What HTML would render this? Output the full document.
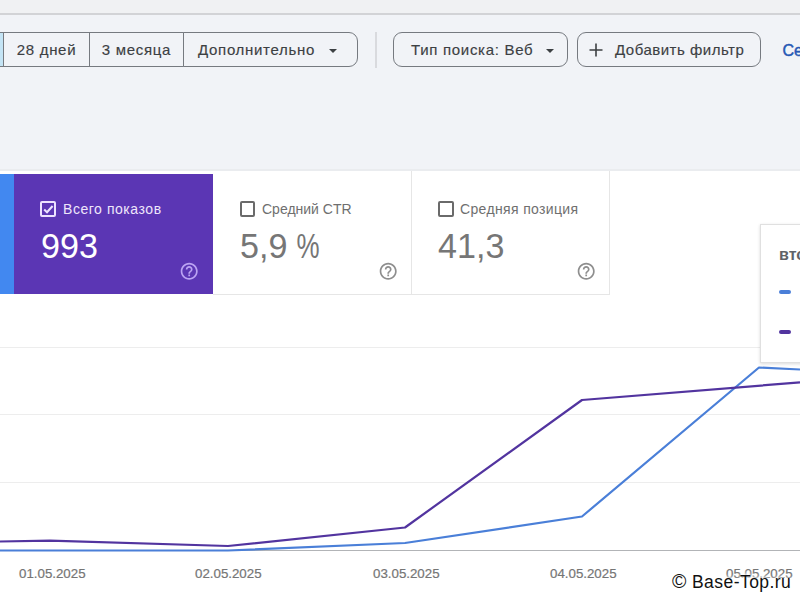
<!DOCTYPE html>
<html><head><meta charset="utf-8">
<style>
*{margin:0;padding:0;box-sizing:border-box}
html,body{width:800px;height:600px;overflow:hidden;background:#f1f3f7;font-family:"Liberation Sans",sans-serif;position:relative}
.abs{position:absolute}
.toparea{left:0;top:0;width:800px;height:13px;background:#f0f1f3}
.topline{left:0;top:12.5px;width:800px;height:2px;background:#d2d3d6}
.btn{position:absolute;top:32px;height:35px;border:1px solid #767a80;color:#3c4043;font-size:15px;letter-spacing:0.7px;line-height:33px;white-space:nowrap;background:#f1f3f7;-webkit-text-stroke:0.15px #3c4043}
.sel{left:-10px;width:14px;background:#c4e4f5;border-right:1px solid #767a80}
.b28{left:4px;width:86px;border-left:none;text-align:center}
.b3m{left:89px;width:95px;border-left:1px solid #767a80;text-align:center}
.bmore{left:183px;width:175px;border-radius:0 9px 9px 0;padding-left:14px}
.divider{left:375px;top:32px;width:2px;height:36px;background:#d9dade}
.btype{left:393px;width:175px;border-radius:9px;padding-left:17px}
.badd{left:577px;width:184px;border-radius:9px;padding-left:37px;letter-spacing:0.5px}
.caret{position:absolute;width:0;height:0;border-left:4.5px solid transparent;border-right:4.5px solid transparent;border-top:4.5px solid #3c4043}
.link{left:782.5px;top:41.5px;color:#2658b4;font-size:16px;-webkit-text-stroke:0.45px #2658b4}
.cards{left:0;top:171px;width:800px;height:429px;background:#fff}
.strip{left:0;top:174px;width:14px;height:120px;background:#4288f0}
.purple{left:14px;top:174px;width:199px;height:120px;background:#5b36b4}
.card{top:171px;height:124px;border-right:1px solid #e6e6e6;border-bottom:1px solid #e6e6e6;background:#fff}
.lbl{position:absolute;font-size:14px;letter-spacing:0.35px;white-space:nowrap}
.val{position:absolute;font-size:35px;white-space:nowrap;transform:scaleX(0.975);transform-origin:0 0}
.cb{position:absolute;width:15.6px;height:15.6px;border:2px solid #6a6a6a;border-radius:2px}
.q{position:absolute;width:17px;height:17px;border:1.4px solid #8a8a8a;border-radius:50%;font-size:12px;line-height:14px;text-align:center;color:#8a8a8a}
.grid{left:0;width:800px;height:1px;background:#ededed}
.xl{position:absolute;top:566px;font-size:13.3px;color:#757575;-webkit-text-stroke:0.2px #757575;white-space:nowrap}
.tip{left:760px;top:224px;width:60px;height:139px;background:#fff;border:1px solid #e0e0e0;box-shadow:0 1px 3px rgba(0,0,0,.15)}
.wm{top:572px;font-size:17.5px;letter-spacing:0.45px;color:#111;white-space:nowrap;text-shadow:0 0 2px #fff,0 0 4px #fff,0 0 5px #fff,0 0 6px #fff}
</style></head><body>
<div class="abs toparea"></div><div class="abs topline"></div>
<div class="btn sel"></div>
<div class="btn b28">28 дней</div>
<div class="btn b3m">3 месяца</div>
<div class="btn bmore">Дополнительно<span class="caret" style="left:145px;top:16px"></span></div>
<div class="abs divider"></div>
<div class="btn btype">Тип поиска: Веб<span class="caret" style="left:151.5px;top:15.5px"></span></div>
<div class="btn badd"><svg class="abs" style="left:10px;top:9px" width="16" height="16" viewBox="0 0 16 16"><path d="M8 1.5V14.5M1.5 8H14.5" stroke="#3c4043" stroke-width="1.6"/></svg>Добавить фильтр</div>
<div class="abs link">Се</div>

<div class="abs cards"></div><div class="abs" style="left:0;top:169px;width:800px;height:2px;background:#eaecef"></div>
<div class="abs strip"></div>
<div class="abs purple">
  <div class="cb" style="left:26.3px;top:27px;border-color:#ece2ff"></div>
  <svg class="abs" style="left:26px;top:27px" width="16" height="16" viewBox="0 0 16 16"><path d="M4.2 8.6L7 11.2 12.6 5" fill="none" stroke="#ece2ff" stroke-width="2.1"/></svg>
  <div class="lbl" style="left:49px;top:27px;color:#eee6fb;letter-spacing:0.55px">Всего показов</div>
  <div class="val" style="left:27px;top:52px;color:#fff">993</div>
  <svg class="abs" style="left:164.8px;top:87px" width="20.4" height="20.4" viewBox="0 0 24 24"><path d="M11 18h2v-2h-2v2zm1-16C6.48 2 2 6.48 2 12s4.48 10 10 10 10-4.48 10-10S17.52 2 12 2zm0 18c-4.41 0-8-3.59-8-8s3.59-8 8-8 8 3.59 8 8-3.59 8-8 8zm0-14c-2.21 0-4 1.79-4 4h2c0-1.1.9-2 2-2s2 .9 2 2c0 2-3 1.75-3 5h2c0-2.25 3-2.5 3-5 0-2.21-1.79-4-4-4z" fill="#bba3f3"/></svg>
</div>
<div class="abs card" style="left:213px;width:199px">
  <div class="cb" style="left:26.6px;top:30px"></div>
  <div class="lbl" style="left:49px;top:30px;color:#6f6f6f;letter-spacing:0">Средний CTR</div>
  <div class="val" style="left:27px;top:55px;color:#767676">5,9 <span style="display:inline-block;transform:scaleX(0.76);transform-origin:0 0">%</span></div>
  <svg class="abs" style="left:165px;top:90px" width="20.4" height="20.4" viewBox="0 0 24 24"><path d="M11 18h2v-2h-2v2zm1-16C6.48 2 2 6.48 2 12s4.48 10 10 10 10-4.48 10-10S17.52 2 12 2zm0 18c-4.41 0-8-3.59-8-8s3.59-8 8-8 8 3.59 8 8-3.59 8-8 8zm0-14c-2.21 0-4 1.79-4 4h2c0-1.1.9-2 2-2s2 .9 2 2c0 2-3 1.75-3 5h2c0-2.25 3-2.5 3-5 0-2.21-1.79-4-4-4z" fill="#8e8e8e"/></svg>
</div>
<div class="abs card" style="left:412px;width:198px">
  <div class="cb" style="left:26.4px;top:30px"></div>
  <div class="lbl" style="left:48px;top:30px;color:#6f6f6f">Средняя позиция</div>
  <div class="val" style="left:26px;top:55px;color:#767676">41,3</div>
  <svg class="abs" style="left:164px;top:90px" width="20.4" height="20.4" viewBox="0 0 24 24"><path d="M11 18h2v-2h-2v2zm1-16C6.48 2 2 6.48 2 12s4.48 10 10 10 10-4.48 10-10S17.52 2 12 2zm0 18c-4.41 0-8-3.59-8-8s3.59-8 8-8 8 3.59 8 8-3.59 8-8 8zm0-14c-2.21 0-4 1.79-4 4h2c0-1.1.9-2 2-2s2 .9 2 2c0 2-3 1.75-3 5h2c0-2.25 3-2.5 3-5 0-2.21-1.79-4-4-4z" fill="#8e8e8e"/></svg>
</div>

<div class="abs grid" style="top:347px"></div>
<div class="abs grid" style="top:414px"></div>
<div class="abs grid" style="top:482px"></div>
<div class="abs grid" style="top:550px;background:#b2b4b7"></div>

<svg class="abs" style="left:0;top:0" width="800" height="600">
  <polyline points="-1,550.5 50,550.5 228,550.5 405,543 582,516.5 759,367.5 800,369.5" fill="none" stroke="#4a7fd8" stroke-width="2.2" stroke-linejoin="round"/>
  <polyline points="-1,541.5 50,540.6 228,546 405,527.5 582,400 800,382.4" fill="none" stroke="#52349f" stroke-width="2.2" stroke-linejoin="round"/>
</svg>

<div class="xl" style="left:19px">01.05.2025</div>
<div class="xl" style="left:195px">02.05.2025</div>
<div class="xl" style="left:373px">03.05.2025</div>
<div class="xl" style="left:550px">04.05.2025</div>
<div class="xl" style="left:726px">05.05.2025</div>

<div class="abs tip">
  <div class="abs" style="left:18px;top:21px;font-size:16px;font-weight:bold;color:#5f6368">вто</div>
  <div class="abs" style="left:18px;top:64.5px;width:12px;height:4px;border-radius:2px;background:#4a7fd8"></div>
  <div class="abs" style="left:18px;top:104.5px;width:12px;height:4px;border-radius:2px;background:#52349f"></div>
</div>

<div class="abs wm" style="left:672px;top:570px;font-size:19.5px;letter-spacing:0">©</div><div class="abs wm" style="left:692px">Base-Top.ru</div>
</body></html>
